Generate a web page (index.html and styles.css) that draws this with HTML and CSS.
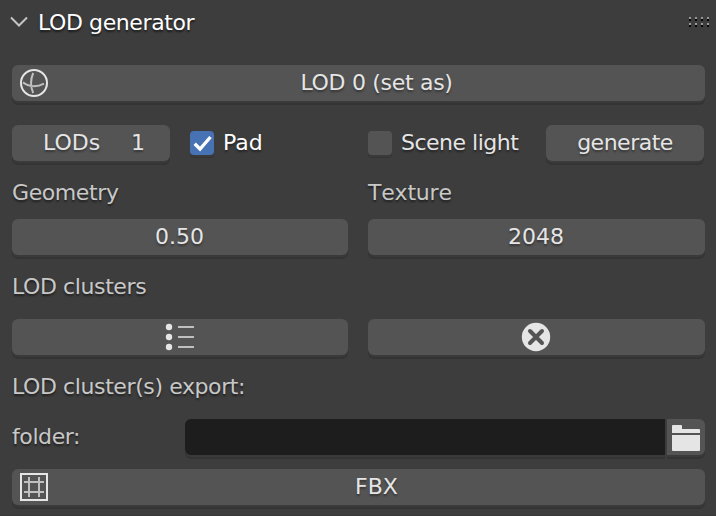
FILE: index.html
```html
<!DOCTYPE html>
<html lang="en">
<head>
<meta charset="utf-8">
<title>LOD generator</title>
<link rel="stylesheet" href="styles.css">
</head>
<body>
<main class="panel">
  <header class="header">
    <svg class="chevron" width="18" height="12" viewBox="0 0 18 12"><path d="M1 1.5 9 9.5 17 1.5"/></svg>
    <h1 class="title"><span class="t-title">LOD generator</span></h1>
    <svg class="grip" width="20" height="10" viewBox="0 0 20 10" shape-rendering="crispEdges">
      <path class="grip-light" d="M0 0h2v2H0zM6 0h2v2H6zM12 0h2v2h-2zM18 0h2v2h-2zM0 6h2v2H0zM6 6h2v2H6zM12 6h2v2h-2zM18 6h2v2h-2z"/>
      <path class="grip-dark" d="M0 2h2v2H0zM6 2h2v2H6zM12 2h2v2h-2zM18 2h2v2h-2zM0 8h2v2H0zM6 8h2v2H6zM12 8h2v2h-2zM18 8h2v2h-2z"/>
    </svg>
  </header>

  <button class="field wide">
    <svg class="lead" width="28" height="28" viewBox="0 0 28 28"><circle cx="14" cy="14" r="13"/><path class="soft" d="M13.2 4C10.6 10 10.6 18 13.2 24M3 13.4C9 18 17 18.3 24 14.6"/></svg>
    <span class="t-set">LOD 0 (set as)</span>
  </button>

  <div class="options">
    <button class="field count"><span class="t-lods">LODs</span><span>1</span></button>
    <label class="check on"><span class="box checked"><svg width="24" height="24" viewBox="0 0 24 24"><path d="M4.7 12.8 10 18 20.5 6"/></svg></span><span class="t-pad">Pad</span></label>
    <label class="check scene"><span class="box"></span><span class="t-scene">Scene light</span></label>
    <button class="field generate"><span class="t-generate">generate</span></button>
  </div>

  <div class="columns labels"><span class="label"><span class="t-geometry">Geometry</span></span><span class="label"><span class="t-texture">Texture</span></span></div>
  <div class="columns values"><button class="field"><span class="t-half">0.50</span></button><button class="field"><span class="t-size">2048</span></button></div>

  <div class="label clusters"><span class="t-clusters">LOD clusters</span></div>
  <div class="columns actions">
    <button class="field"><svg class="list" width="30" height="28" viewBox="0 0 30 28"><circle cx="4" cy="4" r="3.2"/><circle cx="4" cy="14" r="3.2"/><circle cx="4" cy="24" r="3.2"/><path d="M13 4h16M13 14h16M13 24h16"/></svg></button>
    <button class="field"><svg class="cancel" width="30" height="30" viewBox="0 0 30 30"><circle cx="15" cy="15" r="14.2"/><path d="M9 9 21 21M21 9 9 21"/></svg></button>
  </div>

  <div class="label export"><span class="t-export">LOD cluster(s) export:</span></div>
  <div class="folder">
    <span class="label"><span class="t-folder">folder:</span></span>
    <div class="path"></div>
    <button class="field browse"><svg width="28" height="26" viewBox="0 0 28 26"><path d="M0 1q0-1 1-1h8q1 0 1 1v3h17q1 0 1 1v3H0zM0 10h28v15q0 1-1 1H1q-1 0-1-1z"/></svg></button>
  </div>

  <button class="field wide fbx">
    <svg class="lead" width="28" height="28" viewBox="0 0 28 28"><path d="M1 1h26v26H1z"/><path class="soft" d="M9 4v20M19 4v20M4 9h20M4 19h20"/></svg>
    <span class="t-fbx">FBX</span>
  </button>
</main>
</body>
</html>
```
FILE: styles.css
```css
* { box-sizing: border-box; }
body {
  margin: 0;
  background: #3d3d3d;
  color: #e5e5e5;
  font: 22px/36px "DejaVu Sans", sans-serif;
  overflow: hidden;
}
.panel {
  width: 716px;
  height: 516px;
  padding: 5px 11px 0 12px;
  border-bottom: 1px solid #383838;
}
.header { display: flex; align-items: center; height: 36px; margin: 0 -6px 24px -3px; }
.chevron { margin: -2px 10px 0 1px; fill: none; stroke: #c4c4c4; stroke-width: 2; }
.title { margin: 0; flex: 1; font: inherit; line-height: 36px; color: #fff; text-shadow: 0 2px 2px #1b1b1b; }
.grip { margin: -2px 2px 0 0; }
.grip-light { fill: #999; }
.grip-dark { fill: #050505; }
.field {
  display: flex;
  align-items: center;
  justify-content: center;
  height: 36px;
  margin: 0;
  padding: 0;
  border: 0;
  border-radius: 6px;
  background: #545454;
  box-shadow: 0 2px #3a3a3a, 0 4px #343434;
  color: #e5e5e5;
  font: inherit;
  text-shadow: 0 2px 2px #363636;
}
.field > span { white-space: pre; }
.wide { width: 693px; padding: 0 0 0 8px; }
.wide > span { flex: 1; text-align: center; }
.lead { flex: none; fill: none; stroke: #e5e5e5; stroke-width: 2; }
.lead .soft { stroke: #bfc1bf; }
.options { display: flex; margin-top: 24px; height: 36px; }
.count { width: 158px; justify-content: space-between; padding: 0 25px 0 31px; }
.generate { width: 158px; }
.check { display: flex; align-items: center; gap: 9px; margin-left: 20px; width: 178px; color: #e5e5e5; text-shadow: 0 2px 2px #242424; white-space: nowrap; }
.on { color: #fff; }
.scene { margin-left: 0; }
.box { width: 24px; height: 24px; border-radius: 4px; background: #545454; box-shadow: 0 2px #3a3a3a, 0 3px #343434; }
.checked { background: #4772b3; }
.box svg { display: block; fill: none; stroke: #fff; stroke-width: 3.4; }
.columns { display: grid; grid-template-columns: 336px 337px; column-gap: 20px; }
.labels { margin-top: 14px; }
.values { margin-top: 8px; }
.label { height: 36px; color: #c8c8c8; text-shadow: 0 2px 2px #202020; white-space: nowrap; }
.clusters { margin-top: 14px; }
.actions { margin-top: 14px; }
.list { fill: #e5e5e5; }
.list path { stroke: #bfc1bf; stroke-width: 2; }
.cancel { fill: #e5e5e5; margin-right: 1px; }
.cancel path { stroke: #545454; stroke-width: 4; stroke-linecap: round; }
.export { margin-top: 14px; }
.folder { display: flex; margin-top: 14px; }
.folder .label { width: 173px; }
.path { width: 480px; height: 36px; border-radius: 6px 0 0 6px; background: #1d1d1d; box-shadow: 0 2px #3a3a3a, 0 4px #343434; }
.browse { width: 38px; margin-left: 2px; border-radius: 0 6px 6px 0; }
.browse svg { fill: #e5e5e5; margin-top: 2px; }
.fbx { margin-top: 14px; }
.t-set { letter-spacing: -.3px; }
.t-half, .t-size { margin-right: 1px; }
.t-title, .t-geometry, .t-clusters, .t-export, .t-folder { letter-spacing: -.4px; }
.t-scene, .t-generate { letter-spacing: -.5px; }
.t-texture { letter-spacing: -.2px; font-kerning: none; }
```
